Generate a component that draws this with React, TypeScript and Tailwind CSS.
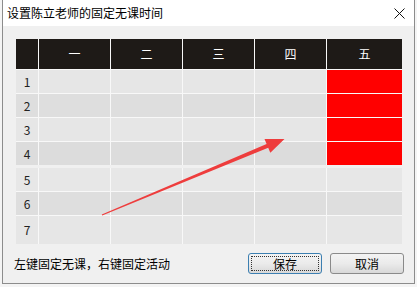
import React from 'react';

const days = ['一', '二', '三', '四', '五'];
const cols = 'grid grid-cols-[22px_71px_71px_71px_71px_75px] gap-x-px';
const rowBg = ['bg-[#e6e6e6]', 'bg-[#dedede]', 'bg-[#e6e6e6]', 'bg-[#dcdcdc]', 'bg-[#e7e7e7]', 'bg-[#dedede]', 'bg-[#e6e6e6]'];
const blocked = [1, 2, 3, 4];

const Row = ({ n, h }: { n: number; h: string }) => (
  <div className={`${cols} ${h}`}>
    <div className={`${rowBg[n - 1]} flex items-center justify-center text-[12px] text-[#222]`}>{n}</div>
    {days.map((d, i) => (
      <div
        key={d}
        className={i === 4 && blocked.includes(n) ? 'bg-[#ff0000]' : rowBg[n - 1]}
      />
    ))}
  </div>
);

const Btn = ({ label, focus }: { label: string; focus?: boolean }) => (
  <button
    className={`w-[74px] h-[21px] rounded-[3px] border text-[12px] text-black bg-gradient-to-b from-[#f3f3f3] via-[#ebebeb] to-[#d8d8d8] flex items-center justify-center p-[2px] ${
      focus ? 'border-[#3c7fb1]' : 'border-[#8a8a8a]'
    }`}
  >
    <span
      className={`w-full h-full flex items-center justify-center ${
        focus ? 'border border-dotted border-[#333]' : ''
      }`}
    >
      {label}
    </span>
  </button>
);

export default function App() {
  return (
    <div
      className="relative w-[417px] h-[287px] bg-[#f4f4f4] pl-[2px]"
      style={{ fontFamily: '"Noto Sans CJK SC", "Microsoft YaHei", sans-serif' }}
    >
      <div className="w-[413px] h-[284px] border-x border-b border-[#8c8c8c] bg-[#f0f0f0] flex flex-col">
        <div className="h-[26px] bg-white flex items-center justify-between pl-[4px] pr-[9px]">
          <span className="text-[12px] text-black leading-none">设置陈立老师的固定无课时间</span>
          <svg width="11" height="11" viewBox="0 0 11 11">
            <path d="M0.5 0.5L10.5 10.5M10.5 0.5L0.5 10.5" stroke="#111" strokeWidth="1" />
          </svg>
        </div>

        <div className="pl-[13px] pt-[13px] flex flex-col">
          <div className="w-[386px] bg-[#f8f8f8] flex flex-col gap-y-px">
            <div className={`${cols} h-[30px]`}>
              <div className="bg-[#1e1a17]" />
              {days.map((d) => (
                <div key={d} className="bg-[#1e1a17] flex items-center justify-center text-white text-[12px]">
                  {d}
                </div>
              ))}
            </div>
            {[1, 2, 3, 4].map((n) => (
              <Row key={n} n={n} h="h-[23px]" />
            ))}
          </div>
          <div className="h-[3px]" />
          <div className="w-[386px] bg-[#f8f8f8] flex flex-col gap-y-px">
            <Row n={5} h="h-[23px]" />
            <Row n={6} h="h-[23px]" />
            <Row n={7} h="h-[28px]" />
          </div>
        </div>

        <div className="mt-[9px] flex items-center pl-[11px] pr-[10px]">
          <span className="text-[12px] text-black flex-1">左键固定无课，右键固定活动</span>
          <div className="flex gap-[8px]">
            <Btn label="保存" focus />
            <Btn label="取消" />
          </div>
        </div>
      </div>

      <svg className="absolute left-0 top-0 pointer-events-none" width="417" height="287">
        <polygon
          points="101.8,214.5 266.6,144 264.5,139 284.5,139 270.3,152.8 268.2,147.7 102.2,215.5"
          fill="#ee3d3d"
        />
      </svg>
    </div>
  );
}
